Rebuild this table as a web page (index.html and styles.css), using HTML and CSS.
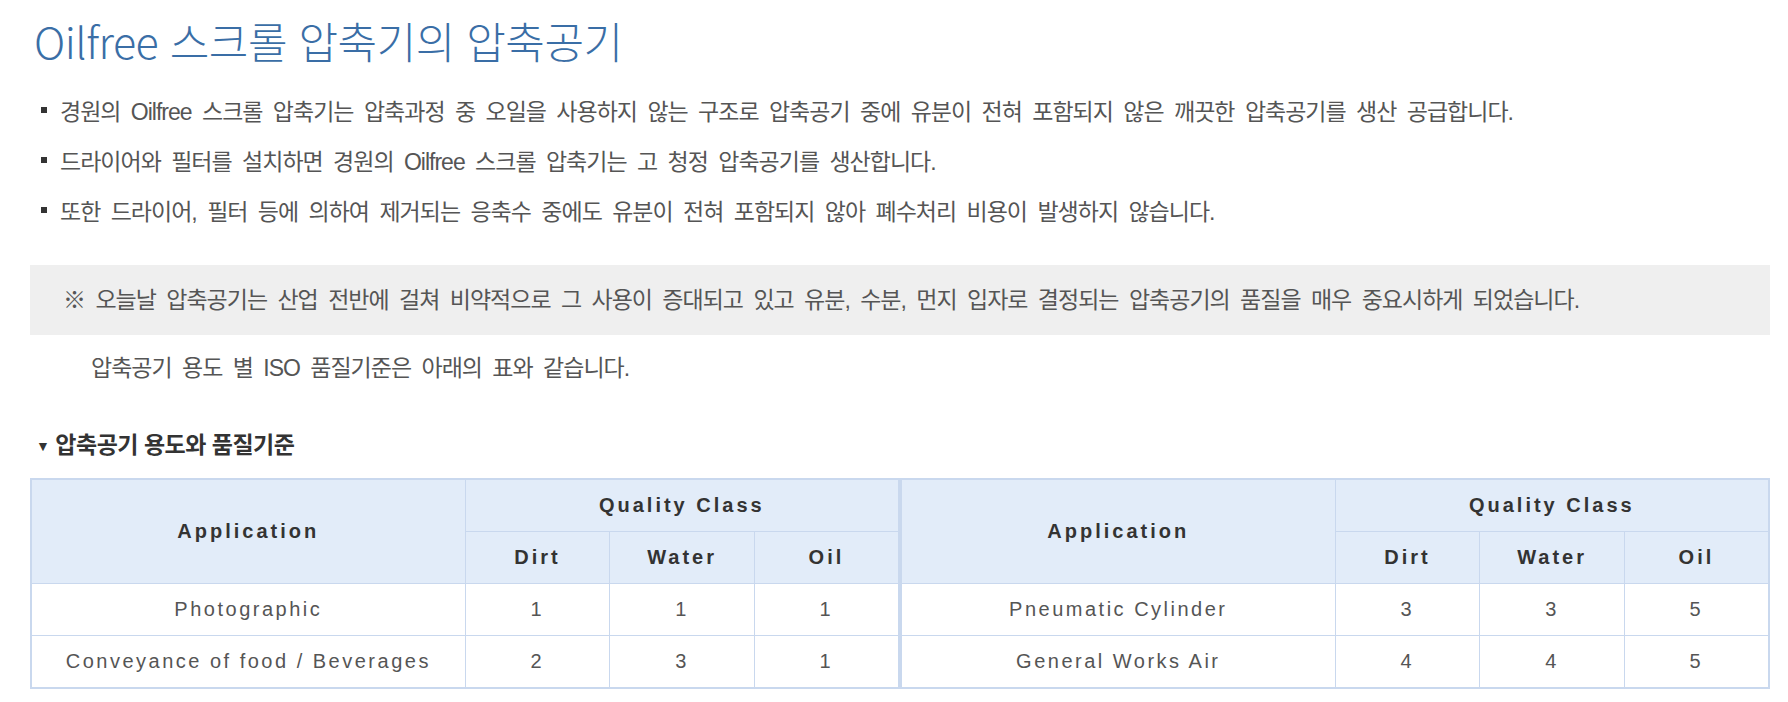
FILE: index.html
```html
<!DOCTYPE html>
<html lang="ko">
<head>
    <meta charset="UTF-8">
    <meta name="viewport" content="width=device-width, initial-scale=1.0">
    <title>Oilfree 스크롤 압축기의 압축공기</title>
    <link rel="stylesheet" href="styles.css">
</head>
<body>
    <div class="page">
        <h1 class="title">Oilfree 스크롤 압축기의 압축공기</h1>

        <ul class="points">
            <li>경원의 Oilfree 스크롤 압축기는 압축과정 중 오일을 사용하지 않는 구조로 압축공기 중에 유분이 전혀 포함되지 않은 깨끗한 압축공기를 생산 공급합니다.</li>
            <li>드라이어와 필터를 설치하면 경원의 Oilfree 스크롤 압축기는 고 청정 압축공기를 생산합니다.</li>
            <li>또한 드라이어, 필터 등에 의하여 제거되는 응축수 중에도 유분이 전혀 포함되지 않아 폐수처리 비용이 발생하지 않습니다.</li>
        </ul>

        <div class="notice">※ 오늘날 압축공기는 산업 전반에 걸쳐 비약적으로 그 사용이 증대되고 있고 유분, 수분, 먼지 입자로 결정되는 압축공기의 품질을 매우 중요시하게 되었습니다.</div>
        <p class="notice-sub">압축공기 용도 별 ISO 품질기준은 아래의 표와 같습니다.</p>

        <h2 class="section-title"><span class="arrow">▼</span>압축공기 용도와 품질기준</h2>

        <div class="tables">
            <table class="quality">
                <colgroup>
                    <col class="col-app">
                    <col class="col-val">
                    <col class="col-val">
                    <col class="col-val">
                </colgroup>
                <thead>
                    <tr>
                        <th rowspan="2">Application</th>
                        <th colspan="3">Quality Class</th>
                    </tr>
                    <tr>
                        <th>Dirt</th>
                        <th>Water</th>
                        <th>Oil</th>
                    </tr>
                </thead>
                <tbody>
                    <tr>
                        <td>Photographic</td>
                        <td>1</td>
                        <td>1</td>
                        <td>1</td>
                    </tr>
                    <tr>
                        <td>Conveyance of food / Beverages</td>
                        <td>2</td>
                        <td>3</td>
                        <td>1</td>
                    </tr>
                </tbody>
            </table>

            <table class="quality">
                <colgroup>
                    <col class="col-app">
                    <col class="col-val">
                    <col class="col-val">
                    <col class="col-val">
                </colgroup>
                <thead>
                    <tr>
                        <th rowspan="2">Application</th>
                        <th colspan="3">Quality Class</th>
                    </tr>
                    <tr>
                        <th>Dirt</th>
                        <th>Water</th>
                        <th>Oil</th>
                    </tr>
                </thead>
                <tbody>
                    <tr>
                        <td>Pneumatic Cylinder</td>
                        <td>3</td>
                        <td>3</td>
                        <td>5</td>
                    </tr>
                    <tr>
                        <td>General Works Air</td>
                        <td>4</td>
                        <td>4</td>
                        <td>5</td>
                    </tr>
                </tbody>
            </table>
        </div>
    </div>
</body>
</html>
```

FILE: styles.css
```css
body {
    margin: 0;
    padding: 0;
    background: #fff;
    font-family: "Liberation Sans", "Noto Sans CJK KR", sans-serif;
    color: #555;
}

.page {
    padding: 16px 18px 0 30px;
}

.title {
    margin: 0 0 0 4px;
    font-family: "Noto Sans CJK KR", sans-serif;
    font-size: 43px;
    line-height: 48px;
    font-weight: 300;
    letter-spacing: -0.5px;
    color: #3a6ea6;
}

.points {
    margin: 21px 0 0 0;
    padding: 0;
    list-style: none;
}

.points li {
    display: flex;
    align-items: center;
    height: 50px;
    font-size: 23px;
    letter-spacing: -1px;
    word-spacing: 5px;
    color: #555;
}

.points li::before {
    content: "";
    flex: none;
    width: 6px;
    height: 6px;
    margin: 0 13px 0 11px;
    background: #333;
}

.notice {
    margin-top: 30px;
    height: 70px;
    line-height: 70px;
    padding-left: 33px;
    background: #efefef;
    font-size: 23px;
    letter-spacing: -1px;
    word-spacing: 5px;
    color: #555;
}

.notice-sub {
    margin: 13px 0 0 0;
    padding-left: 61px;
    line-height: 40px;
    font-size: 23px;
    letter-spacing: -1px;
    word-spacing: 5px;
    color: #555;
}

.section-title {
    margin: 42px 0 0 0;
    padding-left: 6px;
    line-height: 30px;
    font-size: 23px;
    font-weight: 700;
    letter-spacing: -0.5px;
    color: #333;
}

.section-title .arrow {
    font-size: 14px;
    margin-right: 6px;
    vertical-align: 2px;
}

.tables {
    display: flex;
    margin-top: 17px;
}

.quality {
    flex: 1;
    border-collapse: collapse;
    border: 2px solid #c9d8ee;
    table-layout: fixed;
}

.quality .col-app {
    width: 50%;
}

.quality .col-val {
    width: 16.66%;
}

.quality th,
.quality td {
    border: 1px solid #c9d8ee;
    text-align: center;
    height: 51px;
    padding: 0;
}

.quality th {
    background: #e2ecf9;
    font-size: 20px;
    font-weight: 700;
    letter-spacing: 3px;
    color: #333;
}

.quality td {
    background: #fff;
    font-size: 20px;
    letter-spacing: 2.5px;
    color: #555;
}
```
